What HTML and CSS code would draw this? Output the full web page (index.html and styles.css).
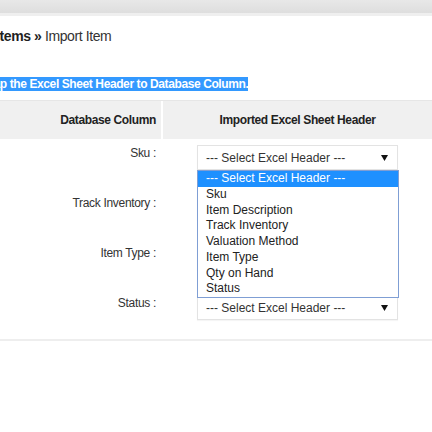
FILE: index.html
```html
<!DOCTYPE html>
<html>
<head>
<meta charset="utf-8">
<link rel="stylesheet" href="styles.css">
</head>
<body>
<div class="topbar"></div>
<div class="crumbs"><b>Items &raquo;</b> Import Item</div>
<p class="hint"><span class="sel">Map the Excel Sheet Header to Database Column.</span></p>
<table class="map">
  <colgroup><col class="col1"><col></colgroup>
  <thead>
    <tr><th class="h1">Database Column</th><th class="h2">Imported Excel Sheet Header</th></tr>
  </thead>
  <tbody>
    <tr>
      <td class="lbl">Sku :</td>
      <td class="fld">
        <div class="select open">
          <span>--- Select Excel Header ---</span>
          <svg class="arrow" width="7" height="6" viewBox="0 0 7 6"><polygon points="0,0 7,0 3.5,6" fill="#111"/></svg>
          <ul class="menu">
            <li class="on">--- Select Excel Header ---</li>
            <li>Sku</li>
            <li>Item Description</li>
            <li>Track Inventory</li>
            <li>Valuation Method</li>
            <li>Item Type</li>
            <li>Qty on Hand</li>
            <li>Status</li>
          </ul>
        </div>
      </td>
    </tr>
    <tr>
      <td class="lbl">Track Inventory :</td>
      <td class="fld"><div class="select"><span>--- Select Excel Header ---</span><svg class="arrow" width="7" height="6" viewBox="0 0 7 6"><polygon points="0,0 7,0 3.5,6" fill="#111"/></svg></div></td>
    </tr>
    <tr>
      <td class="lbl">Item Type :</td>
      <td class="fld"><div class="select"><span>--- Select Excel Header ---</span><svg class="arrow" width="7" height="6" viewBox="0 0 7 6"><polygon points="0,0 7,0 3.5,6" fill="#111"/></svg></div></td>
    </tr>
    <tr>
      <td class="lbl">Status :</td>
      <td class="fld"><div class="select"><span>--- Select Excel Header ---</span><svg class="arrow" width="7" height="6" viewBox="0 0 7 6"><polygon points="0,0 7,0 3.5,6" fill="#111"/></svg></div></td>
    </tr>
  </tbody>
</table>
</body>
</html>
```
FILE: styles.css
```css
html, body {
  margin: 0;
  padding: 0;
  background: #fff;
  overflow: hidden;
  font-family: "Liberation Sans", Arial, sans-serif;
  color: #333;
}
.topbar {
  height: 13px;
  background: linear-gradient(#e8e8e8, #dedede);
  border-bottom: 3px solid #efefef;
}
.crumbs {
  margin: 12px 0 0 -4px;
  font-size: 14px;
  letter-spacing: -0.4px;
  line-height: 16px;
  color: #333;
  white-space: nowrap;
}
.crumbs b {
  color: #1f1f1f;
}
.hint {
  margin: 33px 0 0 -16px;
  font-size: 12px;
  letter-spacing: -0.4px;
  font-weight: bold;
  line-height: 14px;
  white-space: nowrap;
}
.sel {
  background: #3399ff;
  color: #fff;
}
.map {
  margin-top: 9px;
  width: 100%;
  table-layout: fixed;
  border-collapse: separate;
  border-spacing: 0;
  border-top: 1px solid #e6e6e6;
  border-bottom: 2px solid #eeeeee;
}
.col1 { width: 163px; }
.map th {
  height: 38px;
  padding: 0;
  background: #f0f0f0;
  font-size: 12px;
  letter-spacing: -0.37px;
  font-weight: bold;
  color: #222;
  vertical-align: middle;
}
.map th.h1 {
  text-align: right;
  padding-right: 5px;
  border-right: 2px solid #fff;
}
.map th.h2 {
  text-align: center;
}
.map td {
  height: 50px;
  padding: 0;
  vertical-align: top;
  box-sizing: border-box;
}
.lbl {
  text-align: right;
  padding: 7px 7px 0 0 !important;
  font-size: 12px;
  letter-spacing: -0.32px;
  line-height: 14px;
  color: #333;
}
.fld {
  padding-top: 6px !important;
}
.select {
  position: relative;
  box-sizing: border-box;
  width: 201px;
  height: 25px;
  margin: 0 auto;
  padding-left: 8px;
  border: 1px solid #e3e3e3;
  background: #fff;
  box-shadow: 0 1px 1px rgba(0,0,0,0.04);
  display: flex;
  align-items: center;
  font-size: 12px;
  color: #333;
}
.select span { flex: 1; white-space: nowrap; }
.arrow {
  margin-right: 9px;
}
.menu {
  position: absolute;
  top: 24px;
  left: -1px;
  width: 202px;
  box-sizing: border-box;
  margin: 0;
  padding: 0;
  list-style: none;
  border: 1px solid #7f9ed4;
  background: #fff;
  z-index: 2;
}
.menu li {
  height: 15.75px;
  line-height: 15.75px;
  padding-left: 8px;
  font-size: 12px;
  color: #222;
  white-space: nowrap;
}
.menu li.on {
  background: #1e90ff;
  color: #fff;
}
```
